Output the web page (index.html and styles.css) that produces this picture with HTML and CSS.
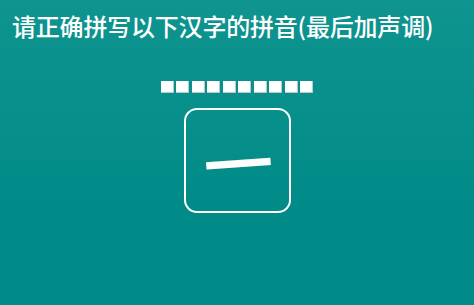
FILE: index.html
```html
<!DOCTYPE html>
<html lang="zh-CN">
<head>
<meta charset="utf-8">
<link rel="stylesheet" href="styles.css">
</head>
<body>
<div class="page">
  <h1 class="title">请正确拼写以下汉字的拼音(最后加声调)</h1>
  <div class="blanks">
    <span class="blank"></span><span class="blank"></span><span class="blank"></span><span class="blank"></span><span class="blank"></span><span class="blank"></span><span class="blank"></span><span class="blank"></span><span class="blank"></span><span class="blank"></span>
  </div>
  <div class="card-wrap">
    <div class="card"><span class="hanzi">一</span></div>
  </div>
</div>
</body>
</html>
```
FILE: styles.css
```css
html, body {
  margin: 0;
  padding: 0;
}
body {
  width: 474px;
  height: 305px;
  overflow: hidden;
  background: linear-gradient(#0f948f, #008b88 70%);
  font-family: "Noto Sans CJK SC", "Noto Sans", sans-serif;
  color: #ffffff;
}
.page {
  display: flex;
  flex-direction: column;
  height: 305px;
}
.title {
  margin: 14px 0 0 12px;
  font-size: 24px;
  line-height: 24px;
  font-weight: 500;
  letter-spacing: -0.2px;
  white-space: nowrap;
}
.blanks {
  margin-top: 43px;
  display: flex;
  justify-content: center;
  gap: 2.5px;
}
.blank {
  width: 13px;
  height: 12px;
  background: #ffffff;
  box-shadow: inset -1px -1px 1px #b9c4c3;
}
.card-wrap {
  margin-top: 15px;
  display: flex;
  justify-content: center;
  padding-left: 1px;
}
.card {
  width: 103px;
  height: 101px;
  border: 2px solid #ffffff;
  border-radius: 13px;
  display: flex;
  align-items: center;
  justify-content: center;
}
.hanzi {
  font-size: 70px;
  line-height: 70px;
  font-weight: 500;
  transform: rotate(-4deg);
}
```
